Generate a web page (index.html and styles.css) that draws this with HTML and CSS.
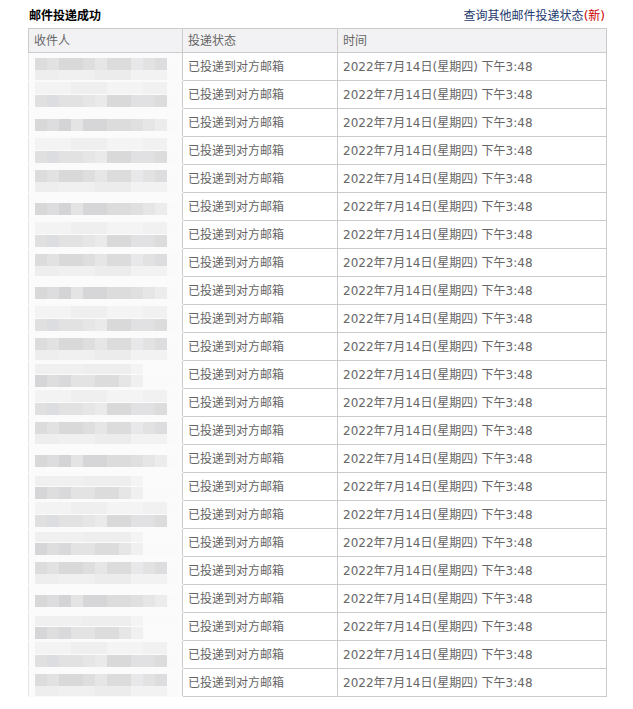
FILE: index.html
```html
<!DOCTYPE html>
<html lang="zh-CN">
<head>
    <meta charset="UTF-8">
    <title>邮件投递状态</title>
    <link rel="stylesheet" href="styles.css">
</head>
<body>
    <div class="top">
        <div class="title">邮件投递成功</div>
        <a class="link" href="#">查询其他邮件投递状态<em>(新)</em></a>
    </div>
    <table class="list">
        <colgroup>
            <col class="c1">
            <col class="c2">
            <col class="c3">
        </colgroup>
        <thead>
            <tr><th>收件人</th><th>投递状态</th><th>时间</th></tr>
        </thead>
        <tbody>
            <tr><td class="who"><div class="mosaic m1"></div></td><td>已投递到对方邮箱</td><td>2022年7月14日(星期四) 下午3:48</td></tr>
            <tr><td class="who"><div class="mosaic m2"></div></td><td>已投递到对方邮箱</td><td>2022年7月14日(星期四) 下午3:48</td></tr>
            <tr><td class="who"><div class="mosaic m3"></div></td><td>已投递到对方邮箱</td><td>2022年7月14日(星期四) 下午3:48</td></tr>
            <tr><td class="who"><div class="mosaic m2"></div></td><td>已投递到对方邮箱</td><td>2022年7月14日(星期四) 下午3:48</td></tr>
            <tr><td class="who"><div class="mosaic m1"></div></td><td>已投递到对方邮箱</td><td>2022年7月14日(星期四) 下午3:48</td></tr>
            <tr><td class="who"><div class="mosaic m3"></div></td><td>已投递到对方邮箱</td><td>2022年7月14日(星期四) 下午3:48</td></tr>
            <tr><td class="who"><div class="mosaic m2"></div></td><td>已投递到对方邮箱</td><td>2022年7月14日(星期四) 下午3:48</td></tr>
            <tr><td class="who"><div class="mosaic m1"></div></td><td>已投递到对方邮箱</td><td>2022年7月14日(星期四) 下午3:48</td></tr>
            <tr><td class="who"><div class="mosaic m3"></div></td><td>已投递到对方邮箱</td><td>2022年7月14日(星期四) 下午3:48</td></tr>
            <tr><td class="who"><div class="mosaic m2"></div></td><td>已投递到对方邮箱</td><td>2022年7月14日(星期四) 下午3:48</td></tr>
            <tr><td class="who"><div class="mosaic m1"></div></td><td>已投递到对方邮箱</td><td>2022年7月14日(星期四) 下午3:48</td></tr>
            <tr><td class="who"><div class="mosaic m4"></div></td><td>已投递到对方邮箱</td><td>2022年7月14日(星期四) 下午3:48</td></tr>
            <tr><td class="who"><div class="mosaic m2"></div></td><td>已投递到对方邮箱</td><td>2022年7月14日(星期四) 下午3:48</td></tr>
            <tr><td class="who"><div class="mosaic m1"></div></td><td>已投递到对方邮箱</td><td>2022年7月14日(星期四) 下午3:48</td></tr>
            <tr><td class="who"><div class="mosaic m3"></div></td><td>已投递到对方邮箱</td><td>2022年7月14日(星期四) 下午3:48</td></tr>
            <tr><td class="who"><div class="mosaic m4"></div></td><td>已投递到对方邮箱</td><td>2022年7月14日(星期四) 下午3:48</td></tr>
            <tr><td class="who"><div class="mosaic m2"></div></td><td>已投递到对方邮箱</td><td>2022年7月14日(星期四) 下午3:48</td></tr>
            <tr><td class="who"><div class="mosaic m4"></div></td><td>已投递到对方邮箱</td><td>2022年7月14日(星期四) 下午3:48</td></tr>
            <tr><td class="who"><div class="mosaic m1"></div></td><td>已投递到对方邮箱</td><td>2022年7月14日(星期四) 下午3:48</td></tr>
            <tr><td class="who"><div class="mosaic m3"></div></td><td>已投递到对方邮箱</td><td>2022年7月14日(星期四) 下午3:48</td></tr>
            <tr><td class="who"><div class="mosaic m4"></div></td><td>已投递到对方邮箱</td><td>2022年7月14日(星期四) 下午3:48</td></tr>
            <tr><td class="who"><div class="mosaic m2"></div></td><td>已投递到对方邮箱</td><td>2022年7月14日(星期四) 下午3:48</td></tr>
            <tr><td class="who"><div class="mosaic m1"></div></td><td>已投递到对方邮箱</td><td>2022年7月14日(星期四) 下午3:48</td></tr>
        </tbody>
    </table>
</body>
</html>
```

FILE: styles.css
```css
body {
    margin: 0;
    padding: 0 0 0 28px;
    font-family: "DejaVu Sans", "Noto Sans CJK SC", sans-serif;
    font-size: 12px;
    color: #666;
    background: #fff;
}
.top {
    display: flex;
    justify-content: space-between;
    align-items: center;
    width: 577px;
    height: 28px;
}
.title {
    padding-left: 1px;
    font-size: 12px;
    font-weight: bold;
    color: #000;
}
.link {
    font-size: 12px;
    color: #1e3a6e;
    text-decoration: none;
}
.link em {
    color: #c00;
    font-style: normal;
}
.list {
    border-collapse: collapse;
    table-layout: fixed;
    width: 579px;
}
.list .c1 {
    width: 154px;
}
.list .c2 {
    width: 155px;
}
.list th {
    height: 22px;
    padding: 1px 5px 0;
    border: 1px solid #cbcbcb;
    background: #f2f2f4;
    font-weight: normal;
    text-align: left;
    line-height: 20px;
}
.list td {
    height: 27px;
    padding: 0 5px;
    border: 1px solid #cbcbcb;
    line-height: 20px;
    white-space: nowrap;
}
.list td.who {
    padding: 0;
    border-left-color: #e6e6e6;
    border-bottom-color: #fafafa;
    background: #fbfbfb;
}
.mosaic {
    height: 26px;
    margin: 0 4px 0 6px;
    filter: blur(0.6px);
}
.m1 {
    background:
        linear-gradient(90deg, #dcdcdc 0 12px, #e2e2e2 12px 24px, #d9d9da 24px 48px, #dedede 48px 60px, #e6e6e6 60px 72px, #dcdcdc 72px 96px, #e8e8ea 96px 108px, #e2e2e2 108px 120px, #dddde0 120px 132px, #fafafa 132px) 0 4px / 100% 12px no-repeat,
        linear-gradient(90deg, #eeeeee 0 24px, #f0f0f0 24px 60px, #ececec 60px 96px, #f2f2f2 96px 132px, #fafafa 132px) 0 16px / 100% 10px no-repeat;
}
.m2 {
    background:
        linear-gradient(90deg, #f3f3f3 0 36px, #efefef 36px 72px, #f4f4f4 72px 108px, #f1f1f1 108px 132px, #fafafa 132px) 0 0 / 100% 12px no-repeat,
        linear-gradient(90deg, #e0e0e0 0 12px, #dbdde0 12px 24px, #e2e2e2 24px 48px, #e6e6e6 48px 60px, #eaeaea 60px 72px, #d9d9d9 72px 96px, #e1e1e3 96px 120px, #dcdcdc 120px 132px, #fafafa 132px) 0 13px / 100% 12px no-repeat;
}
.m3 {
    background:
        linear-gradient(90deg, #d8d8d8 0 12px, #dddddf 12px 24px, #d4d4d6 24px 36px, #e4e4e4 36px 48px, #d6d6d8 48px 72px, #dcdcdc 72px 96px, #e0e0e0 96px 108px, #e6e6e6 108px 120px, #ececec 120px 132px, #fafafa 132px) 0 9px / 100% 12px no-repeat;
}
.m4 {
    background:
        linear-gradient(90deg, #f0f0f0 0 48px, #eeeeee 48px 96px, #f4f4f4 96px 108px, #fafafa 108px) 0 2px / 100% 10px no-repeat,
        linear-gradient(90deg, #d6d6d8 0 12px, #dedede 12px 24px, #d9d9dc 24px 36px, #e3e3e3 36px 60px, #dcdcdc 60px 84px, #e6e6e6 84px 96px, #f0f0f0 96px 108px, #fafafa 108px) 0 13px / 100% 12px no-repeat;
}
```
